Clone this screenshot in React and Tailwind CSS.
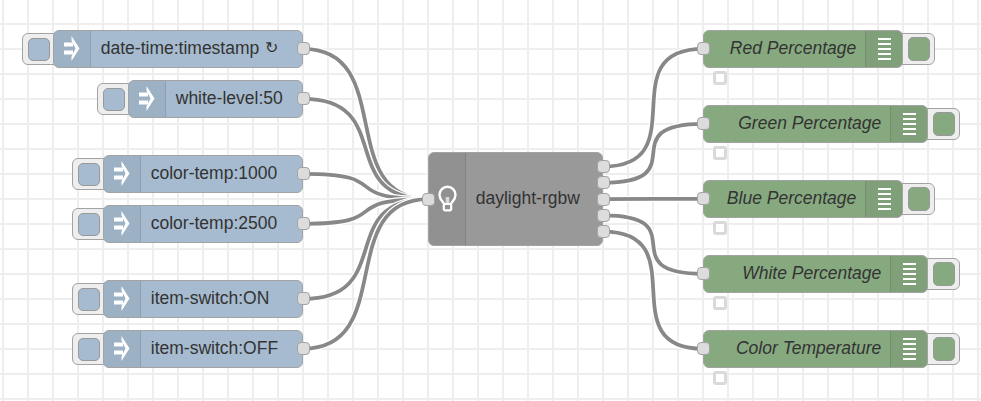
const S = 1.25;
const injects = [
  { x: 53.25, y: 30, w: 250, t: "date-time:timestamp", repeat: true },
  { x: 128.25, y: 80, w: 175, t: "white-level:50" },
  { x: 103.25, y: 155, w: 200, t: "color-temp:1000" },
  { x: 103.25, y: 205, w: 200, t: "color-temp:2500" },
  { x: 103.25, y: 280, w: 200, t: "item-switch:ON" },
  { x: 103.25, y: 330, w: 200, t: "item-switch:OFF" },
];
const debugs = [
  { x: 703.25, y: 30, w: 200, t: "Red Percentage" },
  { x: 703.25, y: 105, w: 225, t: "Green Percentage" },
  { x: 703.25, y: 180, w: 200, t: "Blue Percentage" },
  { x: 703.25, y: 255, w: 225, t: "White Percentage" },
  { x: 703.25, y: 330, w: 225, t: "Color Temperature" },
];
const inPort = { x: 428.25, y: 199 };
const outs = [166.5, 182.75, 199, 215.25, 231.5].map((y) => ({ x: 603.25, y }));

const wire = (a, b) => {
  const c = 100 * S * 0.75;
  return `M ${a.x} ${a.y} C ${a.x + c} ${a.y} ${b.x - c} ${b.y} ${b.x} ${b.y}`;
};
const wires = [
  ...injects.map((n) => wire({ x: n.x + n.w, y: n.y + 18.75 }, inPort)),
  ...debugs.map((n, i) => wire(outs[i], { x: n.x, y: n.y + 18.75 })),
];

function Port({ x, y }) {
  return (
    <div
      className="absolute box-border h-[13px] w-[13px] rounded-[4px] border border-[#a3a3a3] bg-[#dcdcdc]"
      style={{ left: x - 6.5, top: y - 6.5 }}
    />
  );
}

function InjectIcon() {
  return (
    <svg width="37" height="37" viewBox="0 0 37 37" className="shrink-0">
      <g fill="#ffffff">
        <rect x="10" y="12.5" width="9" height="4" />
        <rect x="10" y="20.5" width="9" height="4" />
        <path d="M17.5 6L25.5 18.5L17.5 31L17.5 26.5L21.5 18.5L17.5 10.5Z" />
      </g>
    </svg>
  );
}

function DebugIcon() {
  return (
    <div className="flex w-[13px] flex-col gap-[3px]">
      <div className="h-[2px] bg-white" />
      <div className="h-[2px] bg-white" />
      <div className="h-[2px] bg-white" />
      <div className="h-[2px] bg-white" />
      <div className="h-[2px] bg-white" />
    </div>
  );
}

function BulbIcon() {
  return (
    <svg width="37" height="37" viewBox="0 0 37 37" className="shrink-0">
      <g fill="none" stroke="#ffffff">
        <path d="M15.5 24C15 21 10.5 19.5 10.5 13.7A8 8 0 0 1 26.5 13.7C26.5 19.5 22 21 21.5 24" strokeWidth="2.4" />
        <rect x="16.7" y="16" width="3.6" height="7" fill="#d8d8d8" stroke="none" />
        <rect x="14.8" y="23" width="7.4" height="6.3" rx="1.5" strokeWidth="2.2" />
      </g>
    </svg>
  );
}

function InjectNode({ n }) {
  return (
    <>
      <div
        className="absolute box-border flex items-center rounded-l-[6px] border border-[#a3a3a3] bg-[#eeeeee] pl-[4.5px]"
        style={{ left: n.x - 31, top: n.y + 3, width: 36, height: 32 }}
      >
        <div className="box-border h-[23px] w-[22px] rounded-[5px] border border-[#999999] bg-[#a6bbcf]" />
      </div>
      <div
        className="absolute box-border flex items-stretch rounded-[6px] border border-[#a3a3a3] bg-[#a6bbcf]"
        style={{ left: n.x, top: n.y, width: n.w, height: 37.5 }}
      >
        <div className="flex w-[37px] shrink-0 items-center justify-center rounded-l-[5px] border-r border-black/10 bg-black/5">
          <InjectIcon />
        </div>
        <div className="flex items-center whitespace-nowrap pb-[2px] pl-[9.5px] text-[17.5px] text-[#333333]">
          {n.t}
          {n.repeat ? <span className="ml-[6px] text-[16px] font-light [font-family:'DejaVu_Sans',sans-serif]">↻</span> : null}
        </div>
      </div>
      <Port x={n.x + n.w} y={n.y + 18.75} />
    </>
  );
}

function DebugNode({ n }) {
  return (
    <>
      <div
        className="absolute box-border flex items-center justify-end rounded-r-[6px] border border-[#a3a3a3] bg-[#eeeeee] pr-[4.5px]"
        style={{ left: n.x + n.w - 5, top: n.y + 3, width: 37, height: 32 }}
      >
        <div className="box-border h-[24px] w-[22px] rounded-[5px] border border-[#999999] bg-[#87a980]" />
      </div>
      <div
        className="absolute box-border flex items-stretch justify-end rounded-[6px] border border-[#a3a3a3] bg-[#87a980]"
        style={{ left: n.x, top: n.y, width: n.w, height: 37.5 }}
      >
        <div className="flex items-center whitespace-nowrap pb-[2px] pr-[9px] text-[17.5px] italic text-[#333333]">{n.t}</div>
        <div className="flex w-[37px] shrink-0 items-center justify-center rounded-r-[5px] border-l border-black/10 bg-black/5">
          <DebugIcon />
        </div>
      </div>
      <Port x={n.x} y={n.y + 18.75} />
      <div
        className="absolute box-border h-[14px] w-[14px] rounded-[3px] border-[3px] border-[#dadada] bg-white"
        style={{ left: n.x + 9.5, top: n.y + 41 }}
      />
    </>
  );
}

export default function App() {
  return (
    <div className="relative h-[401px] w-[981px] overflow-hidden bg-white bg-[linear-gradient(to_right,#eeeeee_2px,transparent_2px),linear-gradient(to_bottom,#eeeeee_2px,transparent_2px)] bg-size-[25px_25px] bg-position-[2px_23px] font-['Liberation_Sans',Arial,sans-serif]">
      <svg width="981" height="401" className="absolute left-0 top-0">
        {wires.map((d, i) => (
          <g key={i} fill="none">
            <path d={d} stroke="#ffffff" strokeWidth="6.25" />
            <path d={d} stroke="#888888" strokeWidth="3.75" />
          </g>
        ))}
      </svg>
      {injects.map((n) => (
        <InjectNode key={n.t} n={n} />
      ))}
      {debugs.map((n) => (
        <DebugNode key={n.t} n={n} />
      ))}
      <div
        className="absolute box-border flex items-stretch rounded-[6px] border border-[#a3a3a3] bg-[#999999]"
        style={{ left: 428.25, top: 152, width: 175, height: 94 }}
      >
        <div className="flex w-[37px] shrink-0 items-center justify-center rounded-l-[5px] border-r border-black/10 bg-black/5">
          <BulbIcon />
        </div>
        <div className="flex items-center whitespace-nowrap pb-[2px] pl-[9.5px] text-[17.5px] text-[#333333]">daylight-rgbw</div>
      </div>
      <Port x={inPort.x} y={inPort.y} />
      {outs.map((p) => (
        <Port key={p.y} x={p.x} y={p.y} />
      ))}
    </div>
  );
}
